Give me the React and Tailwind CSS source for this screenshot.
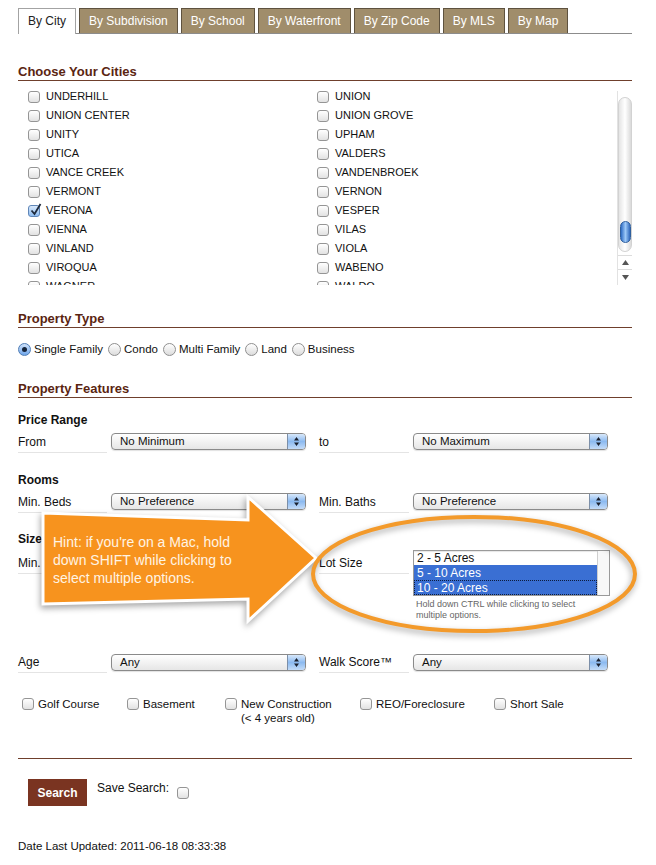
import React from 'react';

const cities = [
  'UNDERHILL', 'UNION', 'UNION CENTER', 'UNION GROVE', 'UNITY', 'UPHAM', 'UTICA', 'VALDERS',
  'VANCE CREEK', 'VANDENBROEK', 'VERMONT', 'VERNON', 'VERONA', 'VESPER', 'VIENNA', 'VILAS',
  'VINLAND', 'VIOLA', 'VIROQUA', 'WABENO', 'WAGNER', 'WALDO',
];

const tabs = ['By City', 'By Subdivision', 'By School', 'By Waterfront', 'By Zip Code', 'By MLS', 'By Map'];

const Check = ({ checked }) => (
  <span
    className={`relative inline-block h-[12px] w-[12px] shrink-0 rounded-[3px] border ${
      checked ? 'border-[#5f86b8] bg-linear-to-b from-[#d9e9fb] to-[#8dbcf0]' : 'border-[#959595] bg-linear-to-b from-white to-[#e2e2e2]'
    }`}
  >
    {checked && (
      <svg className="absolute -top-[3px] left-[1px]" width="12" height="13" viewBox="0 0 12 13">
        <path d="M1.5 7.5 L4.5 11 L10.5 1" fill="none" stroke="#1e2a3c" strokeWidth="1.8" />
      </svg>
    )}
  </span>
);

const Radio = ({ checked }) => (
  <span
    className={`flex h-[13px] w-[13px] shrink-0 items-center justify-center rounded-full border ${
      checked ? 'border-[#4f7db5] bg-linear-to-b from-[#cfe2fa] to-[#6fa6ea]' : 'border-[#8f8f8f] bg-linear-to-b from-white to-[#dcdcdc]'
    }`}
  >
    {checked && <span className="h-[5px] w-[5px] rounded-full bg-[#15243a]" />}
  </span>
);

const Select = ({ value }) => (
  <div className="flex h-[17px] w-[195px] overflow-hidden rounded-[4px] border border-[#8a8a8a] bg-linear-to-b from-white to-[#e6e6e6] shadow-[0_1px_1px_rgba(0,0,0,0.12)]">
    <span className="flex-1 pl-[8px] text-[11.5px] leading-[15px] text-[#111]">{value}</span>
    <span className="flex w-[18px] items-center justify-center border-l border-[#7c8fa8] bg-linear-to-b from-[#d8e8fa] via-[#8cbaf0] to-[#c4dcf8]">
      <svg width="7" height="11" viewBox="0 0 7 11">
        <path d="M3.5 1 L6 4.5 H1 Z M3.5 10 L6 6.5 H1 Z" fill="#1c2230" />
      </svg>
    </span>
  </div>
);

const Label = ({ children, w = 'w-[89px]' }) => (
  <div className={`${w} h-[21px] shrink-0 border-b border-[#e4e4e4] pt-[3px] text-[12px] leading-[14px] text-[#111]`}>
    {children}
  </div>
);

const Heading = ({ children, className = '' }) => (
  <div className={`border-b border-[#6f3f2c] pb-[1px] text-[13px] font-bold leading-[15px] text-[#5a2511] ${className}`}>
    {children}
  </div>
);

const Sub = ({ children, className = '' }) => (
  <div className={`text-[12px] font-bold leading-[14px] text-[#111] ${className}`}>{children}</div>
);

const Row = ({ l1, s1, l2, s2, className = '' }) => (
  <div className={`flex items-start ${className}`}>
    <Label>{l1}</Label>
    <div className="ml-[4px] mt-[1px]">{s1}</div>
    <div className="ml-[13px]">
      <Label w="w-[90px]">{l2}</Label>
    </div>
    <div className="ml-[4px] mt-[1px]">{s2}</div>
  </div>
);

export default function App() {
  return (
    <div className="relative h-[865px] w-[656px] overflow-hidden bg-white pl-[18px] pr-[24px] pt-[8px] font-['Liberation_Sans',Arial,sans-serif] text-[#111]">
      {/* tabs */}
      <div className="flex h-[26px] items-end gap-[3px] border-b border-[#8c8c8c]">
        {tabs.map((t, i) =>
          i === 0 ? (
            <div key={t} className="-mb-px flex h-[26px] items-center border border-b-0 border-[#a3a3a3] bg-white px-[9px] pb-[1px] text-[12px] text-[#222]">
              {t}
            </div>
          ) : (
            <div key={t} className="flex h-[25px] items-center border border-b-0 border-[#5e523f] bg-[#a08d6b] px-[9px] text-[12px] text-white">
              {t}
            </div>
          )
        )}
      </div>

      <Heading className="mt-[30px]">Choose Your Cities</Heading>

      {/* city list */}
      <div className="mt-[10px] flex h-[194px]">
        <div className="flex-1 overflow-hidden">
          <div className="-mt-[4px] grid grid-cols-[289px_289px] pl-[10px]">
            {cities.map((c) => (
              <div key={c} className="flex h-[19px] items-center text-[11px]">
                <Check checked={c === 'VERONA'} />
                <span className="ml-[6px] leading-[13px]">{c}</span>
              </div>
            ))}
          </div>
        </div>
        <div className="flex w-[15px] flex-col border-l border-[#e2e2e2] bg-white pt-[6px]">
          <div className="flex h-[156px] flex-col justify-end rounded-full border border-[#d2d2d2] bg-linear-to-r from-[#e4e4e4] via-white to-[#dadada] pb-[8px]">
            <div className="mx-auto h-[22px] w-[11px] rounded-full border border-[#2f5f9e] bg-linear-to-r from-[#2d6cc4] via-[#9cc8f7] to-[#2f68bb]" />
          </div>
          <div className="mt-[3px] flex h-[15px] items-center justify-center border-b border-t border-[#dcdcdc]">
            <svg width="7" height="5" viewBox="0 0 7 5"><path d="M3.5 0 L7 5 H0 Z" fill="#555" /></svg>
          </div>
          <div className="flex h-[15px] items-center justify-center">
            <svg width="7" height="5" viewBox="0 0 7 5"><path d="M3.5 5 L7 0 H0 Z" fill="#555" /></svg>
          </div>
        </div>
      </div>

      <Heading className="mt-[26px]">Property Type</Heading>
      <div className="mt-[14px] flex h-[14px] items-center text-[11.5px] leading-[14px]">
        {['Single Family', 'Condo', 'Multi Family', 'Land', 'Business'].map((t, i) => (
          <div key={t} className={`flex items-center ${i ? 'ml-[5px]' : ''}`}>
            <Radio checked={i === 0} />
            <span className="ml-[3px]">{t}</span>
          </div>
        ))}
      </div>

      <Heading className="mt-[25px]">Property Features</Heading>

      <Sub className="mt-[15px]">Price Range</Sub>
      <Row className="mt-[5px]" l1="From" s1={<Select value="No Minimum" />} l2="to" s2={<Select value="No Maximum" />} />

      <Sub className="mt-[20px]">Rooms</Sub>
      <Row className="mt-[5px]" l1="Min. Beds" s1={<Select value="No Preference" />} l2="Min. Baths" s2={<Select value="No Preference" />} />

      <Sub className="mt-[19px]">Size</Sub>
      <div className="mt-[7px] flex items-start">
        <Label>Min.</Label>
        <div className="ml-[212px]">
          <Label w="w-[90px]">Lot Size</Label>
        </div>
        <div className="ml-[4px] -mt-[3px]">
          <div className="flex h-[46px] w-[197px] border border-[#9a9a9a] bg-white shadow-[inset_0_1px_1px_rgba(0,0,0,0.1)]">
            <div className="flex-1 text-[12px] leading-[14px]">
              <div className="h-[14px] pl-[3px]">2 - 5 Acres</div>
              <div className="h-[15px] bg-[#3a6fd3] pl-[3px] pt-px text-white">5 - 10 Acres</div>
              <div className="h-[15px] border border-dotted border-[#0d1c3d] bg-[#3a6fd3] pl-[2px] text-white">10 - 20 Acres</div>
            </div>
            <div className="w-[12px] border-l border-[#cfcfcf] bg-[#f8f8f8]" />
          </div>
          <div className="mt-[3px] pl-[3px] text-[9px] leading-[11px] text-[#666]">
            Hold down CTRL while clicking to select
            <br />
            multiple options.
          </div>
        </div>
      </div>

      <div className="mt-[31px] flex items-start">
        <Label>Age</Label>
        <div className="ml-[4px] mt-[2px]"><Select value="Any" /></div>
        <div className="ml-[13px]"><Label w="w-[90px]">Walk Score™</Label></div>
        <div className="ml-[4px] mt-[2px]"><Select value="Any" /></div>
      </div>

      {/* feature checkboxes */}
      <div className="mt-[24px] flex items-start pl-[4px] text-[11.5px] leading-[14px]">
        {[
          ['Golf Course', 'w-[105px]'],
          ['Basement', 'w-[98px]'],
          ['New Construction', 'w-[135px]'],
          ['REO/Foreclosure', 'w-[134px]'],
          ['Short Sale', ''],
        ].map(([t, w]) => (
          <div key={t} className={`flex items-start ${w}`}>
            <span className="mt-px"><Check /></span>
            <span className="ml-[4px]">
              {t}
              {t === 'New Construction' && (
                <>
                  <br />
                  (&lt; 4 years old)
                </>
              )}
            </span>
          </div>
        ))}
      </div>

      <div className="mt-[33px] h-px bg-[#6f3f2c]" />

      <div className="mt-[20px] flex items-start pl-[10px]">
        <button className="flex h-[27px] w-[59px] items-center justify-center bg-[#7a3421] text-[12px] font-bold text-white">
          Search
        </button>
        <span className="ml-[10px] mt-[2px] text-[12px] leading-[14px]">Save Search:</span>
        <span className="ml-[8px] mt-[3px]"><Check /></span>
      </div>

      <div className="mt-[33px] text-[11.5px] leading-[14px]">Date Last Updated: 2011-06-18 08:33:38</div>

      {/* hint overlay */}
      <svg
        className="pointer-events-none absolute left-0 top-0 drop-shadow-[-1px_3px_3px_rgba(0,0,0,0.35)]"
        width="656"
        height="865"
        viewBox="0 0 656 865"
      >
        <polygon
          points="43,513 248,520 248,497 316,558 248,621 248,599 43,604"
          fill="#f7931e"
          stroke="#ffffff"
          strokeWidth="3"
          strokeLinejoin="miter"
        />
        <ellipse cx="474" cy="574" rx="161" ry="57" fill="none" stroke="#f39a2b" strokeWidth="4" />
      </svg>
      <div className="pointer-events-none absolute left-[53px] top-[533px] text-[14px] leading-[18px] text-[#fff4e4]">
        Hint: if you're on a Mac, hold
        <br />
        down SHIFT while clicking to
        <br />
        select multiple options.
      </div>
    </div>
  );
}
